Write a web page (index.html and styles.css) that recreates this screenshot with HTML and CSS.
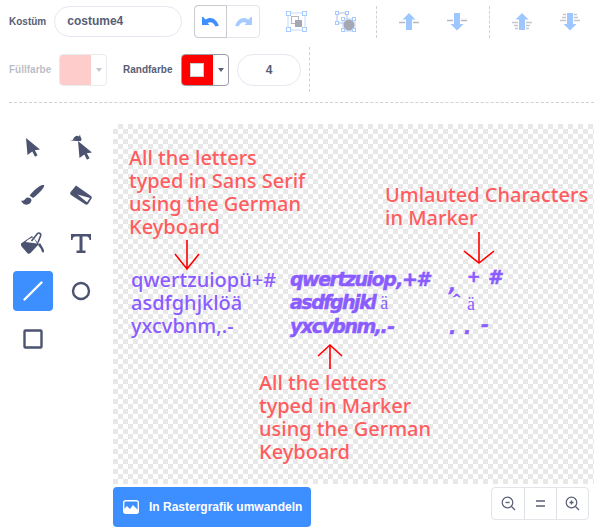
FILE: index.html
```html
<!DOCTYPE html>
<html lang="de">
<head>
    <meta charset="UTF-8" />
    <meta name="viewport" content="width=device-width, initial-scale=1.0" />
    <title>Kostüm</title>
    <link rel="stylesheet" href="styles.css">
</head>
<body>
    <div class="editor">
        <div class="row row-top">
            <span class="label">Kostüm</span>
            <div class="name-field">costume4</div>
            <div class="btn-group undo-group">
                <button class="group-btn group-on"><svg width="17" height="10" viewBox="0 0 17 10"><path d="M0 0v8h7.500L5.500 6c3-1.800 6-.8 8 3.500l3.300-.8C15 2.500 9-1.500 3.500 2.500L1.200 0z" fill="#3d8eff"/></svg></button>
                <button class="group-btn"><svg class="faded" width="17" height="10" viewBox="0 0 17 10"><path d="M17 0v8H9.500l2-2c-3-1.800-6-.8-8 3.500L.2 8.700C2 2.500 8-1.500 13.500 2.500L15.800 0z" fill="#3d8eff"/></svg></button>
            </div>
            <div class="icon-set group-set">
                <svg width="21" height="21" viewBox="0 0 21 21"><rect x="2" y="2" width="17" height="17" fill="none" stroke="#c4dcff"/><g fill="#fff" stroke="#a8ccff"><rect x="0.5" y="0.5" width="4" height="4"/><rect x="16.5" y="0.5" width="4" height="4"/><rect x="0.5" y="16.500" width="4" height="4"/><rect x="16.5" y="16.5" width="4" height="4"/></g><rect x="5.5" y="5.5" width="7" height="7" fill="#fff" stroke="#b5b7c2"/><rect x="9" y="9" width="7" height="7" fill="#a5a7b3"/></svg>
                <svg width="21" height="21" viewBox="0 0 21 21"><rect x="1.500" y="1.500" width="11" height="11" fill="none" stroke="#d4e5ff"/><circle cx="7" cy="7" r="5" fill="none" stroke="#d0d2da"/><g fill="#fff" stroke="#a8ccff"><rect x="0.5" y="0.5" width="3" height="3"/><rect x="10.5" y="0.5" width="3" height="3"/><rect x="0.5" y="10.5" width="3" height="3"/></g><rect x="8" y="8" width="12" height="12" fill="none" stroke="#b8d4ff"/><circle cx="14" cy="14" r="5.500" fill="#a5a7b3"/><g fill="#fff" stroke="#a8ccff"><rect x="6.5" y="6.5" width="3" height="3"/><rect x="17.5" y="6.5" width="3" height="3"/><rect x="6.5" y="17.5" width="3" height="3"/><rect x="17.5" y="17.5" width="3" height="3"/></g></svg>
            </div>
            <div class="dash-v"></div>
            <div class="icon-set order-set">
                <svg width="20" height="18" viewBox="0 0 20 18"><path d="M0 9.500h6M14 9.500h6" stroke="#b5b7c2" stroke-width="1.400"/><path d="M10 0l6.500 6.500H13V17H7V6.500H3.500z" fill="#9ec6ff"/></svg>
                <svg width="20" height="18" viewBox="0 0 20 18"><path d="M0 7.500h6M14 7.500h6" stroke="#b5b7c2" stroke-width="1.400"/><path d="M10 17.500l6.500-6.500H13V0H7v11H3.500z" fill="#9ec6ff"/></svg>
            </div>
            <div class="dash-v"></div>
            <div class="icon-set order-set">
                <svg width="20" height="18" viewBox="0 0 20 18"><path d="M0 9.500h6M14 9.500h6M2 12.500h4M14 12.500h4M3 15.500h3M14 15.500h3" stroke="#c4c6ce" stroke-width="1.400"/><path d="M10 0l6.500 6.500H13V17H7V6.500H3.500z" fill="#9ec6ff"/></svg>
                <svg width="20" height="18" viewBox="0 0 20 18"><path d="M0 7.500h6M14 7.500h6M2 4.500h4M14 4.500h4M3 1.500h3M14 1.500h3" stroke="#c4c6ce" stroke-width="1.400"/><path d="M10 17.500l6.500-6.500H13V0H7v11H3.500z" fill="#9ec6ff"/></svg>
            </div>
        </div>
        <div class="row row-second">
            <span class="label label-off fill-label">Füllfarbe</span>
            <div class="swatch swatch-off">
                <div class="swatch-color fill-color"></div>
                <div class="swatch-caret"><i class="caret"></i></div>
            </div>
            <span class="label stroke-label">Randfarbe</span>
            <div class="swatch">
                <div class="swatch-color stroke-color"><i class="stroke-hole"></i></div>
                <div class="swatch-caret"><i class="caret"></i></div>
            </div>
            <div class="num-field">4</div>
            <div class="dash-v dash-tall"></div>
        </div>
        <div class="dash-h"></div>
        <div class="work">
            <div class="tools">
                <button class="tool"><svg width="14" height="19" viewBox="0 0 14 19"><path d="M0 0l14 11.500-5.200.8 2.800 5-2.600 1.500-2.700-5.300L1.500 17z" fill="#4c5370"/></svg></button>
                <button class="tool"><svg width="22" height="26" viewBox="0 0 22 26"><path d="M0 7c2-.5 3-1 3.500-2.500C5 2 7 1 9 2.500L10 .5l.5 2.500c1.500 1.500 1 3 .3 4H6C4 6.500 2 7 0 7z" fill="#4c5370"/><path d="M8 7l14 11.500-5.200.8 2.800 5-2.600 1.500-2.700-5.300L9.500 24z" fill="#4c5370"/></svg></button>
                <button class="tool"><svg width="24" height="20" viewBox="0 0 24 20"><path d="M23 0c1.500 1.500-5 9-11 13l-3.500-2.500C13 5 20-1 23 0z" fill="#4c5370"/><path d="M0 15.500c3 .8 4-1 5-2.500 2-1.500 5.500 0 5.500 2.300C10 20 3 22 0 15.500z" fill="#4c5370"/></svg></button>
                <button class="tool"><svg width="22" height="20" viewBox="0 0 22 20"><path d="M6 .500l15 10.500c1 1 1 2 .3 3L18 19c-.8 1-1.800 1-2.800.3L1 10C0 9 0 8 .6 7z" fill="#4c5370"/><path d="M7.500 9.500l12.500 3.500-3 4.300z" fill="#fff"/></svg></button>
                <button class="tool"><svg width="24" height="22" viewBox="0 0 24 22"><path d="M0 11.500L11 4l7 8-8.500 9c-1 1-2 1-3 .2L1 15c-1-1-1.200-2.300-1-3.500z" fill="#4c5370"/><path d="M4.500 10c3-3 6-4.500 8-4.500l3.500 6z" fill="#fff"/><path d="M10.500 9l6-7.500c1.300-1.200 3.500 0 3.200 2L17 10.500" fill="none" stroke="#4c5370" stroke-width="1.600"/><path d="M19 11l3 5c1 2 1.500 4 .5 4.500s-2-1-2.500-3.500l-3-4z" fill="#4c5370"/></svg></button>
                <button class="tool"><svg width="20" height="19" viewBox="0 0 20 19"><path d="M0 0h20v6h-1.500c-.2-2-1-3.500-3-3.500h-4V16.500h3V19h-9v-2.500h3V2.500h-4C2.500 2.500 1.700 4 1.500 6H0z" fill="#4c5370"/></svg></button>
                <button class="tool tool-on"><svg width="20" height="20" viewBox="0 0 20 20"><path d="M1.500 18.500l17-17" stroke="#fff" stroke-width="2.400" stroke-linecap="round"/></svg></button>
                <button class="tool"><svg width="20" height="20" viewBox="0 0 20 20"><circle cx="10" cy="10" r="8" fill="none" stroke="#4c5370" stroke-width="2.400"/></svg></button>
                <button class="tool"><svg width="20" height="20" viewBox="0 0 20 20"><rect x="1.500" y="1.500" width="17" height="17" rx="1" fill="none" stroke="#4c5370" stroke-width="2.400"/></svg></button>
            </div>
            <div class="stage-col">
                <div class="stage">
                    <p class="note note-sans">All the letters<br>typed in Sans Serif<br>using the German<br>Keyboard</p>
                    <p class="note note-umlaut">Umlauted Characters<br>in Marker</p>
                    <p class="note note-marker">All the letters<br>typed in Marker<br>using the German<br>Keyboard</p>

                    <svg class="arrow arrow-sans" width="26" height="32" viewBox="0 0 26 32"><path d="M13 0v29M1 14l12 15 12-15" fill="none" stroke="#f00" stroke-width="1.600"/></svg>
                    <svg class="arrow arrow-umlaut" width="34" height="34" viewBox="0 0 34 34"><path d="M17 0v31M2 19l15 12 15-12" fill="none" stroke="#f00" stroke-width="1.600"/></svg>
                    <svg class="arrow arrow-marker" width="26" height="26" viewBox="0 0 26 26"><path d="M13 26V2M1 13L13 2l12 11" fill="none" stroke="#f00" stroke-width="1.600"/></svg>

                    <p class="typed typed-sans">qwertzuiopü+#<br>asdfghjklöä<br>yxcvbnm,.-</p>
                    <p class="typed typed-marker">qwertzuiop<span class="m-tail">,+#</span><br>asdfghjkl<span class="serif-a">ä</span><br>yxcvbnm,.<span class="m-tail">-</span></p>
                    <span class="typed typed-marker mark-a">+</span>
                    <span class="typed typed-marker mark-b">#</span>
                    <span class="typed typed-marker mark-c">,</span>
                    <span class="typed typed-marker mark-d">^</span>
                    <span class="serif-a mark-e">ä</span>
                    <span class="typed typed-marker mark-f">.</span>
                    <span class="typed typed-marker mark-g">.</span>
                    <span class="typed typed-marker mark-h">-</span>
                </div>
                <div class="stage-foot">
                    <button class="convert">
                        <svg width="16" height="14" viewBox="0 0 16 14"><rect x="0.7" y="0.7" width="14.600" height="12.600" rx="2" fill="none" stroke="#fff" stroke-width="1.400"/><path d="M1 12V9l3-3 3 3 3-4 5 5v3H1z" fill="#fff"/></svg>
                        In Rastergrafik umwandeln
                    </button>
                    <div class="btn-group zoom-group">
                        <button class="group-btn"><svg width="15" height="15" viewBox="0 0 15 15"><circle cx="6.500" cy="6.500" r="5.300" fill="none" stroke="#575e75" stroke-width="1.200"/><path d="M4.500 6.500h4" stroke="#575e75" stroke-width="1.300"/><path d="M10.500 10.500l3.500 3.500" stroke="#575e75" stroke-width="1.300"/></svg></button>
                        <button class="group-btn"><svg width="9" height="7" viewBox="0 0 9 7"><path d="M0 1h9M0 6h9" stroke="#575e75" stroke-width="1.600"/></svg></button>
                        <button class="group-btn"><svg width="15" height="15" viewBox="0 0 15 15"><circle cx="6.500" cy="6.500" r="5.300" fill="none" stroke="#575e75" stroke-width="1.200"/><path d="M4.500 6.500h4M6.500 4.500v4" stroke="#575e75" stroke-width="1.300"/><path d="M10.500 10.500l3.500 3.500" stroke="#575e75" stroke-width="1.300"/></svg></button>
                    </div>
                </div>
            </div>
        </div>
    </div>
</body>
</html>
```

FILE: styles.css
```css
* {
    box-sizing: border-box;
}
body {
    margin: 0;
    background: #fff;
    color: #575e75;
    font-family: "Liberation Sans", Arial, sans-serif;
    overflow: hidden;
}
button {
    font-family: inherit;
    border: none;
    background: none;
    padding: 0;
}
.editor {
    width: 611px;
    height: 531px;
    padding: 5px 0 0 9px;
}
.row {
    display: flex;
    align-items: center;
}
.row-top {
    height: 33px;
}
.row-second {
    height: 45px;
    margin-top: 9px;
}
.label {
    font-size: 10px;
    font-weight: 700;
}
.label-off {
    opacity: 0.4;
}
.name-field {
    width: 128px;
    height: 31px;
    margin-left: 8px;
    padding-left: 12px;
    border: 1px solid #e4e8ef;
    border-radius: 16px;
    font-size: 12px;
    font-weight: 700;
    line-height: 29px;
}
.btn-group {
    display: flex;
    border: 1px solid #e4e5ea;
    border-radius: 4px;
}
.group-btn {
    display: flex;
    align-items: center;
    justify-content: center;
}
.group-btn + .group-btn {
    border-left: 1px solid #dfe1e6;
}
.undo-group {
    margin-left: 12px;
    height: 33px;
}
.undo-group .group-btn {
    width: 32px;
}
.group-on {
    margin: -1px 0 -1px -1px;
    width: 33px !important;
    border: 1px solid #c9cbd1;
    border-radius: 4px 0 0 4px;
}
.group-on + .group-btn {
    border-left: none;
}
.faded {
    opacity: 0.45;
}
.icon-set {
    display: flex;
    align-items: center;
}
.group-set {
    margin-left: 26px;
    gap: 28px;
    width: 70px;
}
.dash-v {
    width: 0;
    height: 32px;
    border-left: 1px dashed #cfd1d6;
}
.group-set + .dash-v {
    margin-left: 20px;
}
.order-set {
    gap: 28px;
    padding: 0 22px;
}
.fill-label {
    width: 50px;
}
.swatch {
    display: flex;
    width: 48px;
    height: 32px;
    border-radius: 4px;
    overflow: hidden;
    border: 1px solid #9a9ca8;
}
.swatch-color {
    width: 32px;
    display: flex;
    align-items: center;
    justify-content: center;
    background: #f00;
    margin: -1px 0 -1px -1px;
}
.swatch-caret {
    flex: 1;
    display: flex;
    align-items: center;
    justify-content: center;
}
.caret {
    border: 3.500px solid transparent;
    border-top: 4px solid #575e75;
    border-bottom: 0;
}
.swatch-off {
    border-color: #e9ebef;
}
.swatch-off .caret {
    opacity: 0.35;
}
.fill-color {
    background: #ffcccc;
}
.stroke-hole {
    width: 14px;
    height: 14px;
    background: #fff;
    border: 1px solid #ccc;
}
.stroke-label {
    width: 58px;
    margin-left: 16px;
}
.num-field {
    width: 64px;
    height: 32px;
    margin-left: 8px;
    border: 1px solid #e4e8ef;
    border-radius: 16px;
    text-align: center;
    font-size: 12px;
    font-weight: 700;
    line-height: 30px;
}
.dash-tall {
    height: 45px;
    margin-left: 8px;
}
.dash-h {
    width: 585px;
    margin-top: 10px;
    border-top: 1px dashed #cfd1d6;
}
.work {
    display: flex;
    margin-top: 21px;
}
.tools {
    display: grid;
    grid-template-columns: 40px 40px;
    grid-auto-rows: 40px;
    gap: 8px;
    align-content: start;
    margin: 3px 0 0 4px;
    width: 100px;
}
.tool {
    display: flex;
    align-items: center;
    justify-content: center;
    border-radius: 4px;
}
.tool-on {
    background: #3d8eff;
}
.stage {
    position: relative;
    width: 481px;
    height: 360px;
    overflow: hidden;
    background-color: #fff;
    background-image: conic-gradient(#e8e8e8 25%, #fff 0 50%, #e8e8e8 0 75%, #fff 0);
    background-size: 10px 10px;
}
.stage-foot {
    display: flex;
    justify-content: space-between;
    width: 476px;
    margin-top: 3px;
}
.convert {
    display: flex;
    align-items: center;
    gap: 10px;
    width: 198px;
    height: 40px;
    padding-left: 10px;
    background: #3d8eff;
    border-radius: 4px;
    color: #fff;
    font-size: 12px;
    font-weight: 700;
}
.zoom-group {
    height: 33px;
}
.zoom-group .group-btn {
    width: 32px;
}
.note {
    position: absolute;
    margin: 0;
    color: #ff5c60;
    font-family: "Noto Sans", sans-serif;
    font-size: 20px;
    font-weight: 500;
    line-height: 23px;
    white-space: nowrap;
}
.note-sans {
    left: 16px;
    top: 22px;
}
.note-umlaut {
    left: 272px;
    top: 59px;
}
.note-marker {
    left: 146px;
    top: 247px;
}
.arrow {
    position: absolute;
}
.arrow-sans {
    left: 61px;
    top: 116px;
}
.arrow-umlaut {
    left: 349px;
    top: 108px;
}
.arrow-marker {
    left: 204px;
    top: 219px;
}
.typed {
    position: absolute;
    margin: 0;
    color: #8a5cff;
    white-space: nowrap;
}
.typed-sans {
    left: 18px;
    top: 144px;
    font-family: "Noto Sans", sans-serif;
    font-size: 20px;
    font-weight: 500;
    line-height: 23px;
}
.typed-marker {
    font-family: "DejaVu Sans", sans-serif;
    font-size: 19px;
    font-weight: 700;
    font-style: italic;
    -webkit-text-stroke: 0.5px #8a5cff;
}
p.typed-marker {
    left: 177px;
    top: 144px;
    line-height: 23px;
    letter-spacing: -1.500px;
}
.m-tail {
    margin-left: 1px;
}
.serif-a {
    margin-left: 5px;
    font-family: "Liberation Serif", serif;
    font-size: 18px;
    font-weight: 400;
    font-style: normal;
    color: #8a5cff;
    -webkit-text-stroke: 0;
    letter-spacing: 0;
}
.mark-a { left: 354px; top: 143px; font-size: 16px; }
.mark-b { left: 375px; top: 142px; }
.mark-c { left: 336px; top: 149px; }
.mark-d { left: 339px; top: 168px; font-size: 11px; }
.mark-e { position: absolute; left: 349px; top: 170px; }
.mark-f { left: 336px; top: 192px; }
.mark-g { left: 351px; top: 192px; }
.mark-h { left: 368px; top: 189px; }
```
